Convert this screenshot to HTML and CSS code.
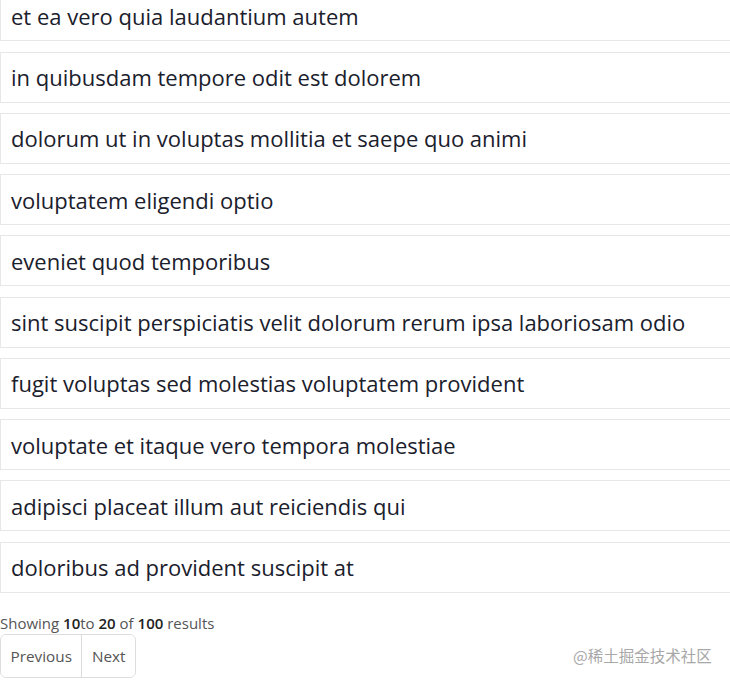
FILE: index.html
```html
<!DOCTYPE html>
<html lang="en">
<head>
    <meta charset="UTF-8">
    <meta name="viewport" content="width=device-width, initial-scale=1.0">
    <title>Posts</title>
    <link rel="stylesheet" href="styles.css">
</head>
<body>
    <div class="post-list">
        <div class="post">et ea vero quia laudantium autem</div>
        <div class="post">in quibusdam tempore odit est dolorem</div>
        <div class="post">dolorum ut in voluptas mollitia et saepe quo animi</div>
        <div class="post">voluptatem eligendi optio</div>
        <div class="post">eveniet quod temporibus</div>
        <div class="post">sint suscipit perspiciatis velit dolorum rerum ipsa laboriosam odio</div>
        <div class="post">fugit voluptas sed molestias voluptatem provident</div>
        <div class="post">voluptate et itaque vero tempora molestiae</div>
        <div class="post">adipisci placeat illum aut reiciendis qui</div>
        <div class="post">doloribus ad provident suscipit at</div>
    </div>

    <div class="pagination">
        <p class="summary">Showing <b>10</b>to <b>20</b> of <b>100</b> results</p>
        <div class="pager">
            <button>Previous</button>
            <button>Next</button>
        </div>
    </div>

    <div class="watermark">@稀土掘金技术社区</div>
</body>
</html>
```

FILE: styles.css
```css
body {
    font-family: "Open Sans", "Noto Sans", sans-serif;
    color: #1a202c;
    background-color: #fff;
    margin: 0;
    padding: 0;
}

.post-list {
    margin-top: -9.75px;
}

.post {
    height: 49px;
    display: flex;
    align-items: center;
    padding: 0 10px;
    border: 1px solid #e7e7e7;
    border-right: none;
    margin-bottom: 10.25px;
    font-size: 22px;
    font-weight: 500;
}

.post:last-child {
    margin-bottom: 0;
}

.pagination {
    margin-top: 19px;
}

.summary {
    margin: 0;
    font-size: 15px;
    color: #555;
    line-height: 22px;
}

.summary b {
    font-weight: 600;
    color: #222;
}

.pager {
    display: inline-flex;
    border: 1px solid #dcdcdc;
    border-radius: 6px;
    overflow: hidden;
}

button {
    font-family: inherit;
    font-size: 15.3px;
    color: #555;
    background-color: #fff;
    border: none;
    padding: 0 9.5px;
    height: 42px;
    cursor: pointer;
}

button + button {
    border-left: 1px solid #dcdcdc;
}

.watermark {
    position: absolute;
    left: 573px;
    top: 644px;
    font-family: "Noto Sans CJK SC", sans-serif;
    font-size: 15.5px;
    color: #a8a8a8;
}
```
